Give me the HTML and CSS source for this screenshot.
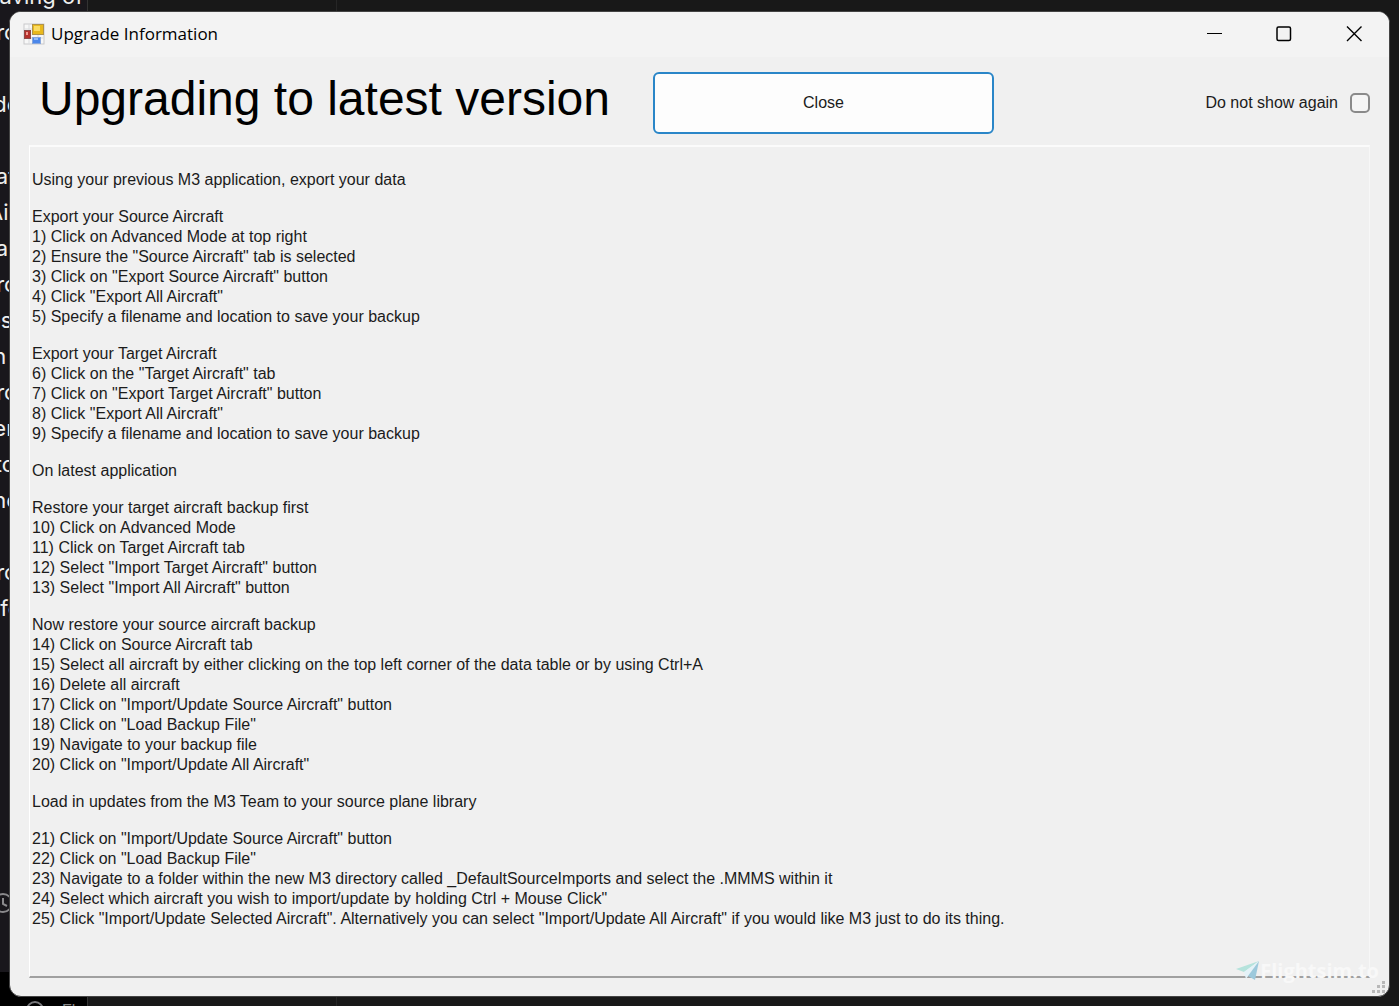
FILE: index.html
```html
<!DOCTYPE html>
<html lang="en">
<head>
    <meta charset="UTF-8">
    <title>Upgrade Information</title>
    <meta name="viewport" content="width=device-width, initial-scale=1">
    <link rel="stylesheet" href="styles.css">
</head>
<body>
    <!-- page behind the window -->
    <div class="backdrop">
        <div class="backdrop-side">
            <p class="backdrop-text">saving of
fro

ide

fat
Ai
fa
fro
es
in
fro
ier
tto
ine

fro
afe</p>
            <svg class="clock" width="24" height="24" viewBox="0 0 24 24" fill="none" stroke="#8a898c" stroke-width="2">
                <circle cx="12" cy="12" r="9"/>
                <path d="M12 7v6l4 2"/>
            </svg>
            <div class="backdrop-foot">
                <svg width="18" height="18" viewBox="0 0 18 18" fill="none" stroke="#77777a" stroke-width="2">
                    <circle cx="9" cy="9" r="8"/>
                </svg>
                <span>Fl</span>
            </div>
        </div>
        <div class="backdrop-main"></div>
    </div>

    <main class="window">
        <header class="titlebar">
            <svg class="app-icon" width="22" height="22" viewBox="0 0 22 22">
                <rect x="1" y="1" width="20" height="20" fill="#f7f7f7" stroke="#c9c9cb"/>
                <path d="M1 6h20M1 15h20M6 1v20M15 1v20" stroke="#d9dadd"/>
                <rect x="9.5" y="1.5" width="11" height="10" fill="#e9b91c" stroke="#b0934a"/>
                <rect x="11" y="3" width="6" height="5" fill="#fbdc62"/>
                <rect x="1.5" y="7.5" width="6" height="8" fill="#b5302c" stroke="#8c4a48"/>
                <rect x="3" y="9" width="2" height="3" fill="#ef9b91"/>
                <rect x="9.5" y="14.5" width="8" height="6" fill="#4b87ea" stroke="#86a6dc"/>
                <rect x="11" y="15" width="4" height="2" fill="#91b9f8"/>
            </svg>
            <span class="titlebar-text">Upgrade Information</span>
            <div class="window-buttons">
                <button type="button" aria-label="Minimize">
                    <svg width="16" height="16" viewBox="0 0 16 16"><path d="M1 7.5h15" stroke="#000"/></svg>
                </button>
                <button type="button" aria-label="Maximize">
                    <svg width="16" height="16" viewBox="0 0 16 16"><rect x="1" y="1" width="13.5" height="13.5" rx="1.5" fill="none" stroke="#000" stroke-width="1.5"/></svg>
                </button>
                <button type="button" aria-label="Close window">
                    <svg width="16" height="16" viewBox="0 0 16 16"><path d="M1 .5l14.5 14.5M15.5.5L1 15" stroke="#000" stroke-width="1.4"/></svg>
                </button>
            </div>
        </header>

        <div class="top">
            <h1>Upgrading to latest version</h1>
            <button type="button" class="close">Close</button>
            <label class="again">Do not show again <input type="checkbox"></label>
        </div>

        <section class="steps">
            <p>Using your previous M3 application, export your data</p>
            <p>Export your Source Aircraft
1) Click on Advanced Mode at top right
2) Ensure the "Source Aircraft" tab is selected
3) Click on "Export Source Aircraft" button
4) Click "Export All Aircraft"
5) Specify a filename and location to save your backup</p>
            <p>Export your Target Aircraft
6) Click on the "Target Aircraft" tab
7) Click on "Export Target Aircraft" button
8) Click "Export All Aircraft"
9) Specify a filename and location to save your backup</p>
            <p>On latest application</p>
            <p>Restore your target aircraft backup first
10) Click on Advanced Mode
11) Click on Target Aircraft tab
12) Select "Import Target Aircraft" button
13) Select "Import All Aircraft" button</p>
            <p>Now restore your source aircraft backup
14) Click on Source Aircraft tab
15) Select all aircraft by either clicking on the top left corner of the data table or by using Ctrl+A
16) Delete all aircraft
17) Click on "Import/Update Source Aircraft" button
18) Click on "Load Backup File"
19) Navigate to your backup file
20) Click on "Import/Update All Aircraft"</p>
            <p>Load in updates from the M3 Team to your source plane library</p>
            <p>21) Click on "Import/Update Source Aircraft" button
22) Click on "Load Backup File"
23) Navigate to a folder within the new M3 directory called _DefaultSourceImports and select the .MMMS within it
24) Select which aircraft you wish to import/update by holding Ctrl + Mouse Click"
25) Click "Import/Update Selected Aircraft". Alternatively you can select "Import/Update All Aircraft" if you would like M3 just to do its thing.</p>
        </section>

        <div class="watermark">
            <svg width="24" height="20" viewBox="0 0 24 20">
                <path d="M0 8L23 0 8 11z" fill="#b5e3dc"/>
                <path d="M23 0L8 11l2 7z" fill="#e4f2f8"/>
                <path d="M23 0l-4 19-7-4z" fill="#9cc9dc"/>
            </svg>
            <span>Flightsim.to</span>
        </div>
        <svg class="grip" width="14" height="14" viewBox="0 0 14 14" fill="#b8b8b8">
            <path d="M10 1h3v3h-3zM5 5h3v3H5zM10 5h3v3h-3zM0 10h3v3H0zM5 10h3v3H5zM10 10h3v3h-3z"/>
        </svg>
    </main>
</body>
</html>
```

FILE: styles.css
```css
* { box-sizing: border-box; }
body {
    margin: 0;
    min-height: 100vh;
    display: flex;
    padding: 11px 9px 9px;
    background: #181818;
    color: #1b1b1b;
    font-family: "Liberation Sans", Arial, sans-serif;
    font-size: 16px;
    line-height: 20px;
}
h1, p { margin: 0; }
button, input { font: inherit; color: inherit; margin: 0; }

.backdrop {
    position: absolute;
    inset: 0;
    display: flex;
    overflow: hidden;
    color: #eee;
}
.backdrop-side {
    width: 88px;
    background: #19171c;
    border-right: 1px solid #333;
    position: relative;
}
.backdrop-text {
    position: absolute;
    top: -22px;
    left: -12px;
    font-family: Inter, sans-serif;
    font-size: 22px;
    line-height: 36px;
    white-space: pre;
}
.backdrop-main { width: 249px; border-right: 1px solid #262626; }
.clock { position: absolute; left: -9px; top: 891px; }
.backdrop-foot {
    position: absolute;
    left: 0;
    right: 0;
    bottom: 0;
    height: 34px;
    padding: 29px 0 0 26px;
    background: #000;
    color: #888;
    display: flex;
    gap: 18px;
    overflow: hidden;
}
.backdrop-foot svg { flex: none; }

.window {
    position: relative;
    flex: 1;
    display: flex;
    flex-direction: column;
    padding: 0 19px 18px;
    background: #f0f0f0;
    border: 1px solid #444;
    border-radius: 12px;
    overflow: hidden;
}
.titlebar {
    display: flex;
    align-items: center;
    height: 45px;
    margin: 0 -19px;
    padding: 0 0 2px 13px;
    background: #f3f3f3;
    color: #000;
    font-family: "Open Sans", sans-serif;
    font-size: 17px;
}
.titlebar-text { margin-left: 6px; }
.window-buttons { display: flex; margin-left: auto; }
.window-buttons button {
    width: 70px;
    height: 43px;
    padding: 0;
    border: 0;
    background: none;
    display: grid;
    place-items: center;
}

.top {
    display: flex;
    align-items: center;
    height: 88px;
    padding: 4px 0 0 10px;
}
h1 {
    width: 614px;
    padding-bottom: 8px;
    color: #000;
    font-size: 48px;
    line-height: 56px;
    font-weight: normal;
    white-space: nowrap;
}
.close {
    width: 341px;
    height: 62px;
    background: #fdfdfd;
    border: 2px solid #2a86c8;
    border-radius: 6px;
}
.again {
    display: flex;
    align-items: center;
    gap: 12px;
    margin-left: auto;
}
.again input {
    appearance: none;
    width: 20px;
    height: 20px;
    border: 2px solid #8a8a8a;
    border-radius: 5px;
    background: #f5f5f5;
}

.steps {
    flex: 1;
    padding: 23px 2px;
    border: 1px solid #f7f7f7;
    border-top: 2px solid #fbfbfb;
    border-left: 1px solid #fff;
    border-bottom: 2px solid #a0a0a0;
}
.steps p { white-space: pre-line; }
.steps p + p { margin-top: 17px; }

.watermark {
    position: absolute;
    right: 10px;
    bottom: 15px;
    display: flex;
    align-items: center;
    color: #f8f8f8;
    font-family: "Open Sans", sans-serif;
    font-size: 20px;
    font-weight: bold;
}
.grip { position: absolute; right: 3px; bottom: 2px; }
```
